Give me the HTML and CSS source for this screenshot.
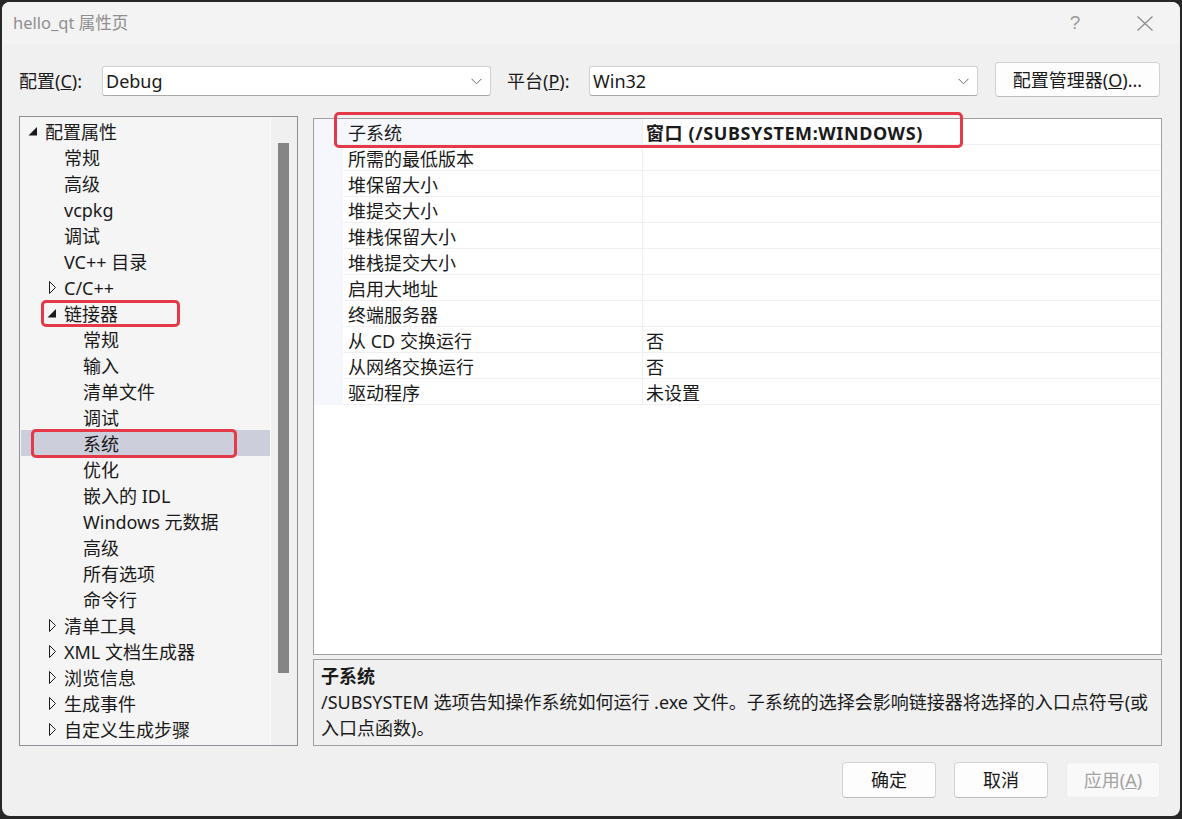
FILE: index.html
```html
<!DOCTYPE html>
<html lang="zh-CN">
<head>
<meta charset="utf-8">
<title>hello_qt 属性页</title>
<link rel="stylesheet" href="styles.css">
</head>
<body>
<div class="window">
  <div class="titlebar">
    <span class="title">hello_qt 属性页</span>
    <span class="tb-btn help">?</span>
    <span class="tb-btn close"><svg width="16" height="15" viewBox="0 0 16 15"><path d="M0.5 0.5 L15.5 14.5 M15.5 0.5 L0.5 14.5" stroke="#8a8a8a" stroke-width="1.2" fill="none"/></svg></span>
  </div>

  <div class="configrow">
    <span class="lbl lbl-cfg">配置(<u>C</u>):</span>
    <div class="combo"><span>Debug</span><svg class="chev" width="11" height="7" viewBox="0 0 11 7"><path d="M0.5 0.8 L5.5 5.8 L10.5 0.8" stroke="#666" stroke-width="1" fill="none"/></svg></div>
    <span class="lbl lbl-plat">平台(<u>P</u>):</span>
    <div class="combo"><span>Win32</span><svg class="chev" width="11" height="7" viewBox="0 0 11 7"><path d="M0.5 0.8 L5.5 5.8 L10.5 0.8" stroke="#666" stroke-width="1" fill="none"/></svg></div>
    <button class="btn mgr">配置管理器(<u>O</u>)...</button>
  </div>

  <div class="main">
    <div class="tree">
      <div class="tree-list">
        <div class="row l0"><span class="tw"><svg width="19" height="26" viewBox="0 0 19 26"><polygon points="11,9 11,17.5 2.5,17.5" fill="#1a1a1a"/></svg></span><span>配置属性</span></div>
        <div class="row l1"><span class="tw"></span><span>常规</span></div>
        <div class="row l1"><span class="tw"></span><span>高级</span></div>
        <div class="row l1"><span class="tw"></span><span>vcpkg</span></div>
        <div class="row l1"><span class="tw"></span><span>调试</span></div>
        <div class="row l1"><span class="tw"></span><span>VC++ 目录</span></div>
        <div class="row l1"><span class="tw"><svg width="19" height="26" viewBox="0 0 19 26"><polygon points="4.5,7.5 10.5,13.5 4.5,19.5" fill="none" stroke="#1a1a1a" stroke-width="1"/></svg></span><span>C/C++</span></div>
        <div class="row l1"><span class="tw"><svg width="19" height="26" viewBox="0 0 19 26"><polygon points="11,9 11,17.5 2.5,17.5" fill="#1a1a1a"/></svg></span><span>链接器</span></div>
        <div class="row l2"><span class="tw"></span><span>常规</span></div>
        <div class="row l2"><span class="tw"></span><span>输入</span></div>
        <div class="row l2"><span class="tw"></span><span>清单文件</span></div>
        <div class="row l2"><span class="tw"></span><span>调试</span></div>
        <div class="row l2 sel"><span class="tw"></span><span>系统</span></div>
        <div class="row l2"><span class="tw"></span><span>优化</span></div>
        <div class="row l2"><span class="tw"></span><span>嵌入的 IDL</span></div>
        <div class="row l2"><span class="tw"></span><span>Windows 元数据</span></div>
        <div class="row l2"><span class="tw"></span><span>高级</span></div>
        <div class="row l2"><span class="tw"></span><span>所有选项</span></div>
        <div class="row l2"><span class="tw"></span><span>命令行</span></div>
        <div class="row l1"><span class="tw"><svg width="19" height="26" viewBox="0 0 19 26"><polygon points="4.5,7.5 10.5,13.5 4.5,19.5" fill="none" stroke="#1a1a1a" stroke-width="1"/></svg></span><span>清单工具</span></div>
        <div class="row l1"><span class="tw"><svg width="19" height="26" viewBox="0 0 19 26"><polygon points="4.5,7.5 10.5,13.5 4.5,19.5" fill="none" stroke="#1a1a1a" stroke-width="1"/></svg></span><span>XML 文档生成器</span></div>
        <div class="row l1"><span class="tw"><svg width="19" height="26" viewBox="0 0 19 26"><polygon points="4.5,7.5 10.5,13.5 4.5,19.5" fill="none" stroke="#1a1a1a" stroke-width="1"/></svg></span><span>浏览信息</span></div>
        <div class="row l1"><span class="tw"><svg width="19" height="26" viewBox="0 0 19 26"><polygon points="4.5,7.5 10.5,13.5 4.5,19.5" fill="none" stroke="#1a1a1a" stroke-width="1"/></svg></span><span>生成事件</span></div>
        <div class="row l1"><span class="tw"><svg width="19" height="26" viewBox="0 0 19 26"><polygon points="4.5,7.5 10.5,13.5 4.5,19.5" fill="none" stroke="#1a1a1a" stroke-width="1"/></svg></span><span>自定义生成步骤</span></div>
      </div>
      <div class="vscroll"><div class="thumb"></div></div>
    </div>

    <div class="right">
      <div class="grid">
        <div class="grow first"><span class="gut"></span><span class="gname">子系统</span><span class="gval bold">窗口 (/SUBSYSTEM:WINDOWS)</span></div>
        <div class="grow"><span class="gut"></span><span class="gname">所需的最低版本</span><span class="gval"></span></div>
        <div class="grow"><span class="gut"></span><span class="gname">堆保留大小</span><span class="gval"></span></div>
        <div class="grow"><span class="gut"></span><span class="gname">堆提交大小</span><span class="gval"></span></div>
        <div class="grow"><span class="gut"></span><span class="gname">堆栈保留大小</span><span class="gval"></span></div>
        <div class="grow"><span class="gut"></span><span class="gname">堆栈提交大小</span><span class="gval"></span></div>
        <div class="grow"><span class="gut"></span><span class="gname">启用大地址</span><span class="gval"></span></div>
        <div class="grow"><span class="gut"></span><span class="gname">终端服务器</span><span class="gval"></span></div>
        <div class="grow"><span class="gut"></span><span class="gname">从 CD 交换运行</span><span class="gval">否</span></div>
        <div class="grow"><span class="gut"></span><span class="gname">从网络交换运行</span><span class="gval">否</span></div>
        <div class="grow"><span class="gut"></span><span class="gname">驱动程序</span><span class="gval">未设置</span></div>
      </div>
      <div class="desc">
        <div class="desc-title">子系统</div>
        <div class="desc-line">/SUBSYSTEM 选项告知操作系统如何运行 .exe 文件。子系统的选择会影响链接器将选择的入口点符号(或</div>
        <div class="desc-line">入口点函数)。</div>
      </div>
    </div>
  </div>

  <div class="footer">
    <button class="btn fbtn">确定</button>
    <button class="btn fbtn">取消</button>
    <button class="btn fbtn disabled">应用(<u>A</u>)</button>
  </div>

  <div class="mark mark-grid"></div>
  <div class="mark mark-linker"></div>
  <div class="mark mark-sys"></div>
</div>
</body>
</html>
```

FILE: styles.css
```css
html, body {
  margin: 0;
}
body {
  padding: 2px;
  background: #272727;
  width: 1178px;
  height: 815px;
  overflow: hidden;
  font-family: "Noto Sans", "Noto Sans CJK SC", sans-serif;
  font-size: 18px;
  color: #1a1a1a;
}
.window {
  position: relative;
  width: 1178px;
  height: 814px;
  background: #f0f0f0;
  border-radius: 8px;
  overflow: hidden;
  display: flex;
  flex-direction: column;
}

/* title bar */
.titlebar {
  height: 42px;
  flex: none;
  background: #f3f3f3;
  display: flex;
  align-items: center;
  padding-left: 11px;
}
.title {
  font-size: 16.5px;
  color: #8f8f8f;
  flex: 1;
  line-height: 40px;
}
.tb-btn {
  width: 70px;
  height: 42px;
  display: flex;
  align-items: center;
  justify-content: center;
  color: #9a9a9a;
}
.help {
  font-family: "Liberation Sans", sans-serif;
  font-size: 19px;
  font-weight: 300;
}

/* config row */
.configrow {
  flex: none;
  height: 35px;
  margin-top: 18px;
  padding-left: 17px;
  display: flex;
  align-items: flex-start;
}
.lbl {
  margin-top: 4px;
  height: 30px;
  line-height: 30px;
  flex: none;
}
.lbl-cfg { width: 83px; }
.lbl-plat { width: 82px; margin-left: 16px; }
.combo {
  flex: none;
  box-sizing: border-box;
  margin-top: 4px;
  width: 389px;
  height: 30px;
  background: #fff;
  border: 1px solid #d0d0d0;
  border-bottom-color: #a8a8a8;
  border-radius: 3px;
  display: flex;
  align-items: center;
  padding-left: 3px;
  line-height: 28px;
}
.chev {
  margin-left: auto;
  margin-right: 8px;
}
.btn {
  font-family: "Noto Sans", "Noto Sans CJK SC", sans-serif;
  font-size: 18px;
  color: #1a1a1a;
  background: #fdfdfd;
  border: 1px solid #d3d3d3;
  border-bottom-color: #bdbdbd;
  border-radius: 4px;
  padding: 0;
  box-sizing: border-box;
  line-height: 1;
}
.mgr {
  flex: none;
  margin-left: 17px;
  width: 165px;
  height: 35px;
}

/* main */
.main {
  flex: none;
  margin-top: 19px;
  padding-left: 17px;
  display: flex;
  height: 630px;
}
.tree {
  flex: none;
  box-sizing: border-box;
  width: 279px;
  height: 630px;
  border: 1px solid #8e8f96;
  display: flex;
}
.tree-list {
  width: 250px;
  background: #f5f5f5;
  border-right: 1px solid #fbfbfb;
  padding-top: 1px;
}
.row {
  height: 26px;
  display: flex;
  align-items: center;
  line-height: 26px;
  white-space: nowrap;
}
.row > span:last-child { padding-top: 1px; }
.row.l0 { padding-left: 6px; }
.row.l1 { padding-left: 25px; }
.row.l2 { padding-left: 44px; }
.row.sel { background: #cccedb; margin-left: 1px; padding-left: 43px; }
.tw {
  width: 19px;
  height: 26px;
  flex: none;
  display: block;
}
.tw svg { display: block; }
.vscroll {
  flex: 1;
  background: #f0f0f0;
  padding-top: 26px;
  padding-left: 7px;
}
.thumb {
  width: 11px;
  height: 530px;
  background: #858585;
}

.right {
  flex: none;
  width: 849px;
  margin-left: 15px;
  display: flex;
  flex-direction: column;
}
.grid {
  box-sizing: border-box;
  margin-top: 2px;
  height: 538px;
  background: #fff;
  border: 1px solid #a0a0a0;
}
.grow {
  display: flex;
  height: 26px;
}
.gut {
  width: 29px;
  flex: none;
  background: #f5f7fc;
}
.gname, .gval {
  box-sizing: border-box;
  height: 26px;
  padding-top: 2px;
  line-height: 24px;
  border-bottom: 1px solid #f0f0f0;
  white-space: nowrap;
}
.gname {
  width: 300px;
  flex: none;
  padding-left: 5px;
  border-right: 1px solid #f0f0f0;
}
.gval {
  flex: 1;
  padding-left: 3px;
}
.grow.first .gname { background: #f5f7fc; }
.bold { font-weight: 700; letter-spacing: 0.6px; }

.desc {
  box-sizing: border-box;
  margin-top: 4px;
  height: 87px;
  border: 1px solid #a0a0a0;
  background: #f0f0f0;
  padding: 3px 0 0 7px;
}
.desc-title {
  font-weight: 700;
  line-height: 26px;
  height: 26px;
}
.desc-line {
  line-height: 26px;
  height: 26px;
  white-space: nowrap;
}

/* footer */
.footer {
  flex: none;
  margin-top: 16px;
  padding-right: 20px;
  display: flex;
  justify-content: flex-end;
  gap: 18px;
}
.fbtn {
  width: 94px;
  height: 36px;
}
.fbtn.disabled {
  background: #f9f9f9;
  border-color: #ececec;
  color: #a3a3a3;
}

/* red annotation marks (overlays) */
.mark {
  position: absolute;
  box-sizing: border-box;
  border: 3px solid #e5394a;
  border-radius: 5px;
}
.mark-grid { left: 332px; top: 110px; width: 629px; height: 36px; }
.mark-linker { left: 39px; top: 298px; width: 139px; height: 27px; }
.mark-sys { left: 29px; top: 427px; width: 206px; height: 29px; }
```
